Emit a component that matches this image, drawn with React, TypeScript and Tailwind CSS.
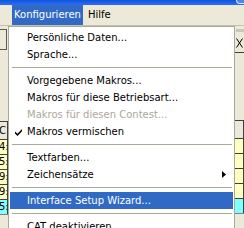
import React from 'react';
import clsx from 'clsx';

type Entry =
  | { kind: 'item'; label: string; disabled?: boolean; checked?: boolean; submenu?: boolean; active?: boolean }
  | { kind: 'sep' };

const entries: Entry[] = [
  { kind: 'item', label: 'Persönliche Daten...' },
  { kind: 'item', label: 'Sprache...' },
  { kind: 'sep' },
  { kind: 'item', label: 'Vorgegebene Makros...' },
  { kind: 'item', label: 'Makros für diese Betriebsart...' },
  { kind: 'item', label: 'Makros für diesen Contest...', disabled: true },
  { kind: 'item', label: 'Makros vermischen', checked: true },
  { kind: 'sep' },
  { kind: 'item', label: 'Textfarben...' },
  { kind: 'item', label: 'Zeichensätze', submenu: true },
  { kind: 'sep' },
  { kind: 'item', label: 'Interface Setup Wizard...', active: true },
  { kind: 'sep' },
  { kind: 'item', label: 'CAT deaktivieren' },
];

const cells = [
  { text: '4:', cyan: false },
  { text: '5:', cyan: false },
  { text: '9:', cyan: false },
  { text: '9:', cyan: false },
  { text: '5:', cyan: true },
];

function MenuRow({ entry }: { entry: Entry }) {
  if (entry.kind === 'sep') {
    return (
      <div className="h-[9px] flex items-center ml-[3px] mr-[2px]">
        <div className="h-px w-full bg-[#aca899]" />
      </div>
    );
  }

  return (
    <div
      className={clsx(
        'h-[17px] mx-[1px] flex items-center whitespace-nowrap',
        entry.active ? 'bg-[#316ac5] text-white' : entry.disabled ? 'text-[#aca899]' : 'text-black'
      )}
    >
      <div className="w-[17px] h-full flex items-center pl-[5px]">
        {entry.checked && (
          <svg width="8" height="8" viewBox="0 0 8 8">
            <polygon points="0,3.5 2.5,5.8 7,1 7,3.2 2.5,8 0,5.6" fill="#000" />
          </svg>
        )}
      </div>
      <span>{entry.label}</span>
      {entry.submenu && (
        <svg className="ml-auto mr-[6px]" width="5" height="7" viewBox="0 0 5 7">
          <polygon points="0,0 4,3.5 0,7" fill="#000" />
        </svg>
      )}
    </div>
  );
}

function Grid({ side }: { side: 'left' | 'right' }) {
  return (
    <div className="flex flex-col border-t border-[#404040]">
      <div className="h-[17px] bg-[#ece9d8] border-r border-[#404040] flex items-center text-black overflow-hidden">
        {side === 'left' && <span className="-ml-[1px]">C</span>}
      </div>
      {cells.map((c, i) => (
        <div
          key={i}
          className={clsx(
            'h-[15px] border-t border-r border-[#404040] flex items-center text-black overflow-hidden',
            c.cyan ? 'bg-[#80ffff]' : 'bg-[#ffffc0]'
          )}
        >
          {side === 'left' && <span className="-ml-[1px]">{c.text}</span>}
        </div>
      ))}
      <div className="h-px bg-[#808080]" />
    </div>
  );
}

export default function App() {
  return (
    <div className="relative w-[244px] h-[228px] overflow-hidden bg-[#ece9d8] font-['DejaVu_Sans',sans-serif] text-[10px] leading-none select-none">
      {/* title bar remnant */}
      <div className="h-[5px] flex justify-end bg-gradient-to-b from-[#0a55e2] to-[#2f6df0]">
        <div className="w-[8px] h-[4px] rounded-bl-[4px] border-l border-b border-[#dfe8ff] bg-[#4a85f2]" />
      </div>

      {/* menu bar */}
      <div className="h-[20px] flex items-stretch">
        <div className="w-[12px] flex items-center overflow-hidden">
          <span className="-ml-[4px] text-black">t</span>
        </div>
        <div className="flex items-center px-[2px] w-[71px] bg-[#316ac5] text-white">Konfigurieren</div>
        <div className="flex items-center pl-[5px] text-black">Hilfe</div>
      </div>

      {/* window content below the open menu */}
      <div className="border-t border-[#c5c2b2] flex">
        <div className="w-[8px] flex flex-col">
          <div className="h-[3px]" />
          <div className="h-[21px] w-[7px] border-y border-r border-[#5a5a5a]" />
          <div className="h-[71px]" />
          <Grid side="left" />
        </div>
        <div className="flex-1" />
        <div className="w-[9px] flex flex-col">
          <div className="h-[3px]" />
          <div className="h-[3px] ml-[1px] bg-[#c9c6bb]" />
          <div className="h-[20px] pl-[1px] pt-[6px]">
            <svg width="7" height="10" viewBox="0 0 7 10">
              <path d="M0.5 0.5 L6.5 9.5 M6.5 0.5 L0.5 9.5" stroke="#000" strokeWidth="1" fill="none" />
            </svg>
          </div>
          <div className="h-px bg-[#404040]" />
          <div className="h-[67px]" />
          <Grid side="right" />
        </div>
      </div>

      {/* open dropdown menu */}
      <div className="absolute left-[8px] top-[26px] w-[227px] h-[230px] bg-white border border-[#aca899] pt-[2px]">
        {entries.map((e, i) => (
          <MenuRow key={i} entry={e} />
        ))}
      </div>
    </div>
  );
}
